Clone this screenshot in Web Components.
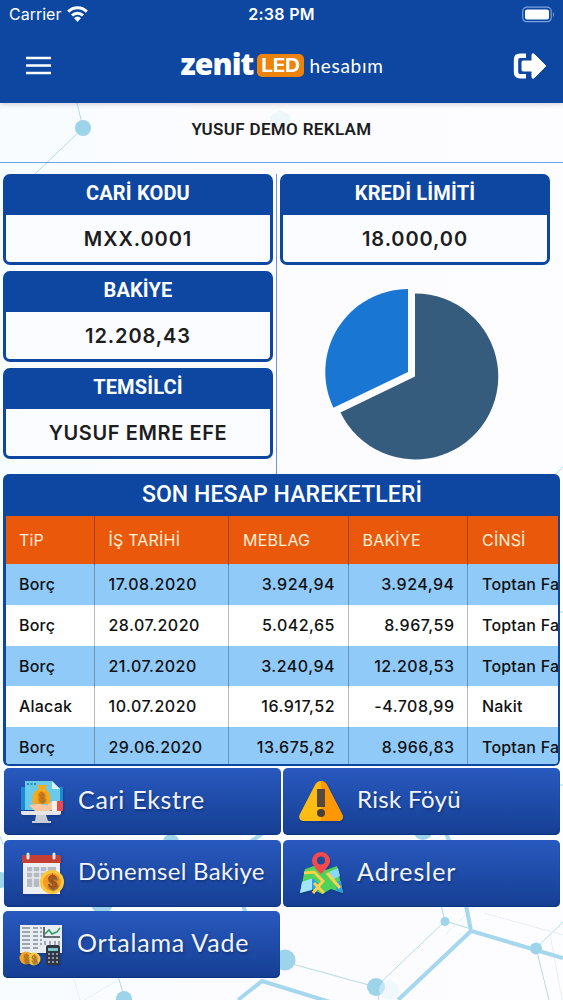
<!DOCTYPE html>
<html lang="tr">
<head>
<meta charset="utf-8">
<title>Zenit LED Hesabım</title>
<style>
  html, body { margin: 0; height: 1000px; overflow: hidden; }
  body { background: #fbfcff; font-family: Inter, "Liberation Sans", sans-serif; color: #1d1d1f; }
</style>
</head>
<body>
<account-app></account-app>

<script>
const icons = {
  statement: `
    <path fill="#1d8ad8" d="M1 7h42v23H1z"/><path fill="#69cbe9" d="M5 1h27l8 8v21H5z"/><path fill="#d8f3fb" d="M32 1l8 8h-8z"/>
    <path stroke="#258fc4" stroke-width="2" stroke-dasharray="2 1.5" d="M7 4h9"/>
    <path fill="#f6a91b" d="M17 5h10l-2 4c6 3 6 9 5 15H13c-1-6-1-12 6-15z"/>
    <text x="17.500" y="20.500" font-size="12" fill="#d86f13">$</text>
    <path fill="#ffc6a0" d="M9 25l9-1 9 1 4-3h3v8l-10 2-9-1z"/><path fill="#f8f1ec" d="M32 21h5v10h-5z"/><path fill="#e9494d" d="M37 21h6v10h-6z"/>
    <path fill="#e5e6ea" d="M1 31h40v2q0 2-2 2H3q-2 0-2-2z"/><path fill="#c9cdd5" d="M16 35h10l2 6h3v2H12v-2h3z"/>`,
  warning: `
    <path fill="#ffbc12" d="M22 1c3 0 5 2 6 4l15 29c2 4 0 7-4 7H5c-4 0-6-3-4-7L16 5c1-2 3-4 6-4z"/>
    <path fill="#ff9800" d="M22 1c3 0 5 2 6 4l15 29c2 4 0 7-4 7H22z"/>
    <path fill="#55483c" d="M18 9h8v18h-8z"/><circle cx="22" cy="33" r="4" fill="#463f3b"/>`,
  calendar: `
    <path fill="#eceff3" d="M3 8h37v34H3z"/><path fill="#c44035" d="M2 5q0-2 2-2h35q2 0 2 2v6H2z"/>
    <path stroke="#dce8f2" stroke-width="3" stroke-linecap="round" d="M8 2v4M34 2v4"/>
    <path fill="#b5bbc4" d="M7 15h29v20H7z"/><path stroke="#e8ecef" stroke-width="1.5" d="M13 14v22M20 14v22M27 14v22M6 20h32M6 26h32"/>
    <circle cx="32" cy="30" r="12" fill="#ffc83b"/><circle cx="32" cy="30" r="9" fill="#f59b22"/>
    <text x="27" y="36" font-size="17" fill="#a54e17">$</text>`,
  map: `
    <path fill="#4fd35a" d="M6 17l9-3 12 4 11-4 6 27-12-4-9 5-10-5-12 4z"/>
    <path fill="#a2e4f8" d="M3 30l11-4-1 12-12 3z"/><path fill="#89d8f7" d="M30 20l9-4 2 8-8 4z"/>
    <path fill="#2d9ee8" d="M13 26l6 5v9l-6-3zM36 30l6-1 2 12-6-2z"/>
    <path fill="none" stroke="#ffd04a" stroke-width="3" d="M5 21l10-1 9 9-10 12M28 21l13 15M15 31l10 10"/>
    <path fill="#f44a4e" d="M22 0c5 0 9 4 9 9 0 5-9 13-9 13s-9-8-9-13c0-5 4-9 9-9z"/><circle cx="22" cy="8.5" r="4" fill="#1d4b9c"/>`,
  report: `
    <path fill="#e8edf2" d="M1 2h42v28H1z"/>
    <path stroke="#858d99" stroke-width="1.4" d="M3 5h8M3 9h8M3 13h8M3 17h8M3 21h8M3 25h8M14 5h5M14 9h5M14 13h5M14 17h5M14 21h5M14 25h5M21 5h2M21 9h2M21 13h2M21 17h2M21 21h2M26 18v4M31 18v4M36 18v4M40 18v4"/>
    <path fill="none" stroke="#394350" stroke-width="1.5" d="M25 4v10h16"/><path fill="none" stroke="#2b9e5a" stroke-width="1.5" d="M26 11l4-4 3 4 5-2 3-4"/>
    <rect x="27" y="22" width="14" height="20" rx="2" fill="#303642"/><path fill="#7ac5ca" d="M29 25h10v3H29z"/>
    <path stroke="#8f9caf" stroke-width="2" stroke-dasharray="2 2" d="M29 31h11M29 35h11M29 39h11"/>
    <circle cx="7" cy="35" r="6.5" fill="#f5a622"/><circle cx="15" cy="36" r="6.500" fill="#ffcd45"/>
    <text x="4" y="39" font-size="10" fill="#be7014">$</text><text x="12" y="40" font-size="10" fill="#be7014">$</text>`
};

class NetworkBackdrop extends HTMLElement {
  constructor() {
    super();
    this.attachShadow({ mode: "open" }).innerHTML = `
      <style>
        :host { position: absolute; inset: 0; z-index: -1; display: block; }
        svg { display: block; }
      </style>
      <svg width="563" height="1000" fill="none">
        <defs><linearGradient id="wash"><stop stop-color="#f7fcff"/><stop offset=".35" stop-color="#fcfcff"/><stop offset="1" stop-color="#fdfdff"/></linearGradient></defs>
        <path fill="url(#wash)" d="M0 103h563v897H0z"/>
        <g stroke="#b7dae7" stroke-width="1">
          <path d="M77 103l6 25-49 47M441 905l4 16 26 8M445 921l-69 66-91-25M376 987l3 13M563 922l-27 26 13 52M118 976l6 20M0 836l3 9M548 481l15-14M558 612h5M545 785h18"/>
        </g>
        <path stroke="#e7eef6" d="M118 980l-34 20M74 979l6 21M484 913l79 22M550 934l12 66M445 935l29-28"/>
        <g stroke="#a5d7ee" stroke-width="4">
          <path d="M466 905l5 26 92 27M471 931l-73 69M238 1000l24-19 68 21M263 833l-20 14M243 905l3 9M446 833l4 10"/>
        </g>
        <g fill="#9ed4ea">
          <circle cx="83" cy="128" r="8"/><circle cx="171" cy="842" r="8"/><circle cx="423" cy="830" r="10"/>
          <circle cx="1" cy="880" r="8"/><circle cx="102" cy="903" r="11"/><circle cx="285" cy="960" r="10.5"/>
          <circle cx="376" cy="987" r="9"/><circle cx="445" cy="921.5" r="4.5"/>
          <circle cx="536" cy="948.5" r="6"/><circle cx="124" cy="999" r="8"/>
        </g>
        <circle cx="389" cy="990" r="10" fill="#e7f4fb88"/><path fill="#edf7fc" d="M270 117l10-7 10 5 2 8-12 5-9-3z"/>
      </svg>`;
  }
}
customElements.define("network-backdrop", NetworkBackdrop);

class AppHeader extends HTMLElement {
  constructor() {
    super();
    this.attachShadow({ mode: "open" }).innerHTML = `
      <style>
        :host { display: block; height: 103px; box-sizing: border-box; background: #0d47a1; color: #fff; box-shadow: 0 1px 5px #6675; }
        .status { display: grid; grid-template-columns: 1fr auto 1fr; align-items: center; height: 28px; padding: 0 7px 0 9px; font-size: 16px; }
        .carrier { display: flex; align-items: center; gap: 6px; letter-spacing: 0; }
        .time { font-weight: 600; font-size: 16px; letter-spacing: .3px; margin-right: 2px; }
        .battery { justify-self: end; }
        .bar { display: flex; align-items: center; justify-content: space-between; height: 75px; padding: 0 16px 0 26px; }
        .logo { display: flex; align-items: center; height: 30px; margin-left: -1px; }
        svg { display: block; }
        .zenit { font: 800 30px/30px "Open Sans", sans-serif; letter-spacing: -.9px; width: 76px; margin-top: -3px; }
        .led { display: flex; align-items: center; justify-content: center; width: 47px; height: 23px; border-radius: 5px; background: #ef8208; margin-right: 6px; }
        .led b { font: 700 19px/20px Inter, sans-serif; letter-spacing: -.5px; transform: scaleX(1.12); }
        .name { font: 400 19px/24px Lato, sans-serif; letter-spacing: .7px; width: 73px; }
      </style>
      <div class="status">
        <span class="carrier">Carrier
          <svg width="21" height="16" viewBox="0 0 21 16" fill="none" stroke="#fff" stroke-width="3"><path d="M1.2 5.6a13.3 13.3 0 0 1 18.6 0M5 9.5a8 8 0 0 1 11 0"/><path fill="#fff" stroke="none" d="M7 12q3.5-3 7 0l-3.5 4z"/></svg>
        </span>
        <span class="time">2:38 PM</span>
        <svg class="battery" width="34" height="17"><rect x=".7" y="1.2" width="28.5" height="14.5" rx="4" fill="none" stroke="#7ca1dc" stroke-width="1.2"/><rect x="3" y="3.5" width="24" height="10" rx="2" fill="#fff"/><path fill="#85a5d4" d="M31 6q2 2.5 0 5z"/></svg>
      </div>
      <div class="bar">
        <svg width="25" height="19" stroke="#fff" stroke-width="2.6"><path d="M0 2h25M0 9.5h25M0 17h25"/></svg>
        <div class="logo"><span class="zenit">zenit</span><span class="led"><b>LED</b></span><span class="name">hesabım</span></div>
        <svg width="34" height="26"><path fill="none" stroke="#fff" stroke-width="4.4" d="M13 2.8H7Q3 2.8 3 7v12q0 4.2 4 4.2h6"/><path fill="#fff" stroke="#fff" stroke-linejoin="round" d="M10 8h9V2q0-2 2-1l11 11q1 1 0 2L21 25q-2 1-2-1v-6h-9q-1 0-1-1V9q0-1 1-1z"/></svg>
      </div>`;
  }
}
customElements.define("app-header", AppHeader);

class InfoCard extends HTMLElement {
  constructor() {
    super();
    this.attachShadow({ mode: "open" }).innerHTML = `
      <style>
        :host { display: flex; flex-direction: column; box-sizing: border-box; width: 270px; height: 91px; border: 3px solid #0d47a1; border-width: 0 3px 3px; border-radius: 7px; background: linear-gradient(#0d47a1 41px, #fbfcff 41px); overflow: hidden; }
        header { flex: none; height: 41px; color: #fff; font: 700 20px/39px Roboto, sans-serif; letter-spacing: .15px; text-align: center; }
        div { flex: none; height: 47px; font: 600 20px/49px Inter, sans-serif; letter-spacing: var(--value-space, .9px); text-align: center; }
      </style>
      <header><slot name="title"></slot></header>
      <div><slot></slot></div>`;
  }
}
customElements.define("info-card", InfoCard);

class BalanceChart extends HTMLElement {
  constructor() {
    super();
    this.attachShadow({ mode: "open" }).innerHTML = `
      <style>
        :host { display: block; margin: 23px 0 0 44px; }
        svg { display: block; }
      </style>
      <svg width="176" height="173">
        <path fill="#355b7d" d="M91 88.5V5.5a83 83 0 1 1-74.5 119z"/>
        <path fill="#1976d2" d="M84 84V1a83 83 0 0 0-74.6 118.8z"/>
      </svg>`;
  }
}
customElements.define("balance-chart", BalanceChart);

class AccountTable extends HTMLElement {
  constructor() {
    super();
    this.attachShadow({ mode: "open" });
    this.rows = [
      ["Borç", "17.08.2020", "3.924,94", "3.924,94", "Toptan Fa"],
      ["Borç", "28.07.2020", "5.042,65", "8.967,59", "Toptan Fa"],
      ["Borç", "21.07.2020", "3.240,94", "12.208,53", "Toptan Fa"],
      ["Alacak", "10.07.2020", "16.917,52", "-4.708,99", "Nakit"],
      ["Borç", "29.06.2020", "13.675,82", "8.966,83", "Toptan Fa"]
    ];
    this.render();
  }

  render() {
    const cells = (row) => row.map((text) => `<span>${text}</span>`).join("");
    this.shadowRoot.innerHTML = `
      <style>
        :host { display: block; box-sizing: border-box; width: 557px; height: 292px; margin-left: 3px; border: 2px solid #0d47a1; border-width: 0 2px 2px 3px; border-radius: 6px; overflow: hidden; background: linear-gradient(#0d47a1 42px, #fff 42px); color: #111; }
        h2 { margin: 0; height: 42px; color: #fff; font: 500 23px/41px Roboto, sans-serif; letter-spacing: .1px; text-align: center; }
        .row { display: grid; grid-template-columns: 88.5px 134.5px 119.5px 119.5px 90px; height: 40.75px; font: 450 16px/41px Inter, sans-serif; letter-spacing: .5px; }
        .row.blue { background: #90caf9; }
        .row.head { height: 48px; line-height: 49px; background: #ea580c; color: #fff0d8; font-weight: 400; letter-spacing: .2px; }
        span { box-sizing: border-box; padding: 0 12.5px 0 14px; border-right: 1px solid #0004; white-space: nowrap; }
        span:first-child { padding-left: 13px; letter-spacing: .2px; }
        span:last-child { border: 0; padding-right: 0; letter-spacing: .2px; }
        .row:not(.head) span:nth-child(3), .row:not(.head) span:nth-child(4) { text-align: right; }
      </style>
      <h2>SON HESAP HAREKETLERİ</h2>
      <div class="row head">${cells(["TiP", "İŞ TARİHİ", "MEBLAG", "BAKİYE", "CİNSİ"])}</div>
      ${this.rows.map((row, i) => `<div class="row ${i % 2 ? "" : "blue"}">${cells(row)}</div>`).join("")}`;
  }
}
customElements.define("account-table", AccountTable);

class MenuButton extends HTMLElement {
  constructor() {
    super();
    this.attachShadow({ mode: "open" });
  }

  connectedCallback() {
    this.shadowRoot.innerHTML = `
      <style>
        :host { display: block; height: 67px; }
        button { display: flex; align-items: center; gap: 14px; width: 100%; height: 67px; border: 0; padding: 0 0 0 16px; border-radius: 5px; background: linear-gradient(#2859bf, #163f93); box-shadow: inset 0 -1px 1px #0b347f; color: #f2f4fa; text-align: left; font: 400 var(--label-size, 25px)/30px Lato, sans-serif; letter-spacing: var(--label-space, .5px); text-shadow: 1px 2px 2px #0c2b6699; white-space: nowrap; }
        svg { flex: none; filter: drop-shadow(1px 2px 1px #0b2b6755); }
        span { padding-bottom: 5px; }
      </style>
      <button><svg width="44" height="44" viewBox="0 0 44 44" font-family="Inter" font-weight="600">${icons[this.getAttribute("icon")]}</svg><span><slot></slot></span></button>`;
  }
}
customElements.define("menu-button", MenuButton);

class AccountApp extends HTMLElement {
  constructor() {
    super();
    this.attachShadow({ mode: "open" }).innerHTML = `
      <style>
        :host { display: block; position: relative; z-index: 0; width: 563px; height: 1000px; overflow: hidden; }
        h1 { margin: 0; height: 60px; box-sizing: border-box; border-bottom: 1px solid #6ca1ed; font: 600 17px/53px Roboto, sans-serif; letter-spacing: .35px; text-align: center; }
        .summary { display: grid; grid-template-columns: 273px 1fr; height: 300px; padding: 11px 0 0 3px; }
        .left { display: flex; flex-direction: column; gap: 6px; }
        .right { border-left: 1.5px solid #6695e8; padding-left: 3px; }
        .person { --value-space: .6px; }
        nav { display: grid; grid-template-columns: 277px 277px; gap: 5px 2px; padding: 2px 0 0 4px; }
        [icon=statement] { --label-space: .7px; }
        [icon=warning] { --label-size: 24px; --label-space: .35px; }
        [icon=calendar] { --label-size: 24px; --label-space: .3px; }
        [icon=map] { --label-space: 1px; }
        [icon=report] { --label-space: .8px; margin: -1px 1px 0 -1px; }
      </style>
      <network-backdrop></network-backdrop>
      <app-header></app-header>
      <h1>YUSUF DEMO REKLAM</h1>
      <section class="summary">
        <div class="left">
          <info-card><span slot="title">CARİ KODU</span>MXX.0001</info-card>
          <info-card><span slot="title">BAKİYE</span>12.208,43</info-card>
          <info-card class="person"><span slot="title">TEMSİLCİ</span>YUSUF EMRE EFE</info-card>
        </div>
        <div class="right">
          <info-card><span slot="title">KREDİ LİMİTİ</span>18.000,00</info-card>
          <balance-chart></balance-chart>
        </div>
      </section>
      <account-table></account-table>
      <nav>
        <menu-button icon="statement">Cari Ekstre</menu-button>
        <menu-button icon="warning">Risk Föyü</menu-button>
        <menu-button icon="calendar">Dönemsel Bakiye</menu-button>
        <menu-button icon="map">Adresler</menu-button>
        <menu-button icon="report">Ortalama Vade</menu-button>
      </nav>`;
  }
}
customElements.define("account-app", AccountApp);
</script>
</body>
</html>
